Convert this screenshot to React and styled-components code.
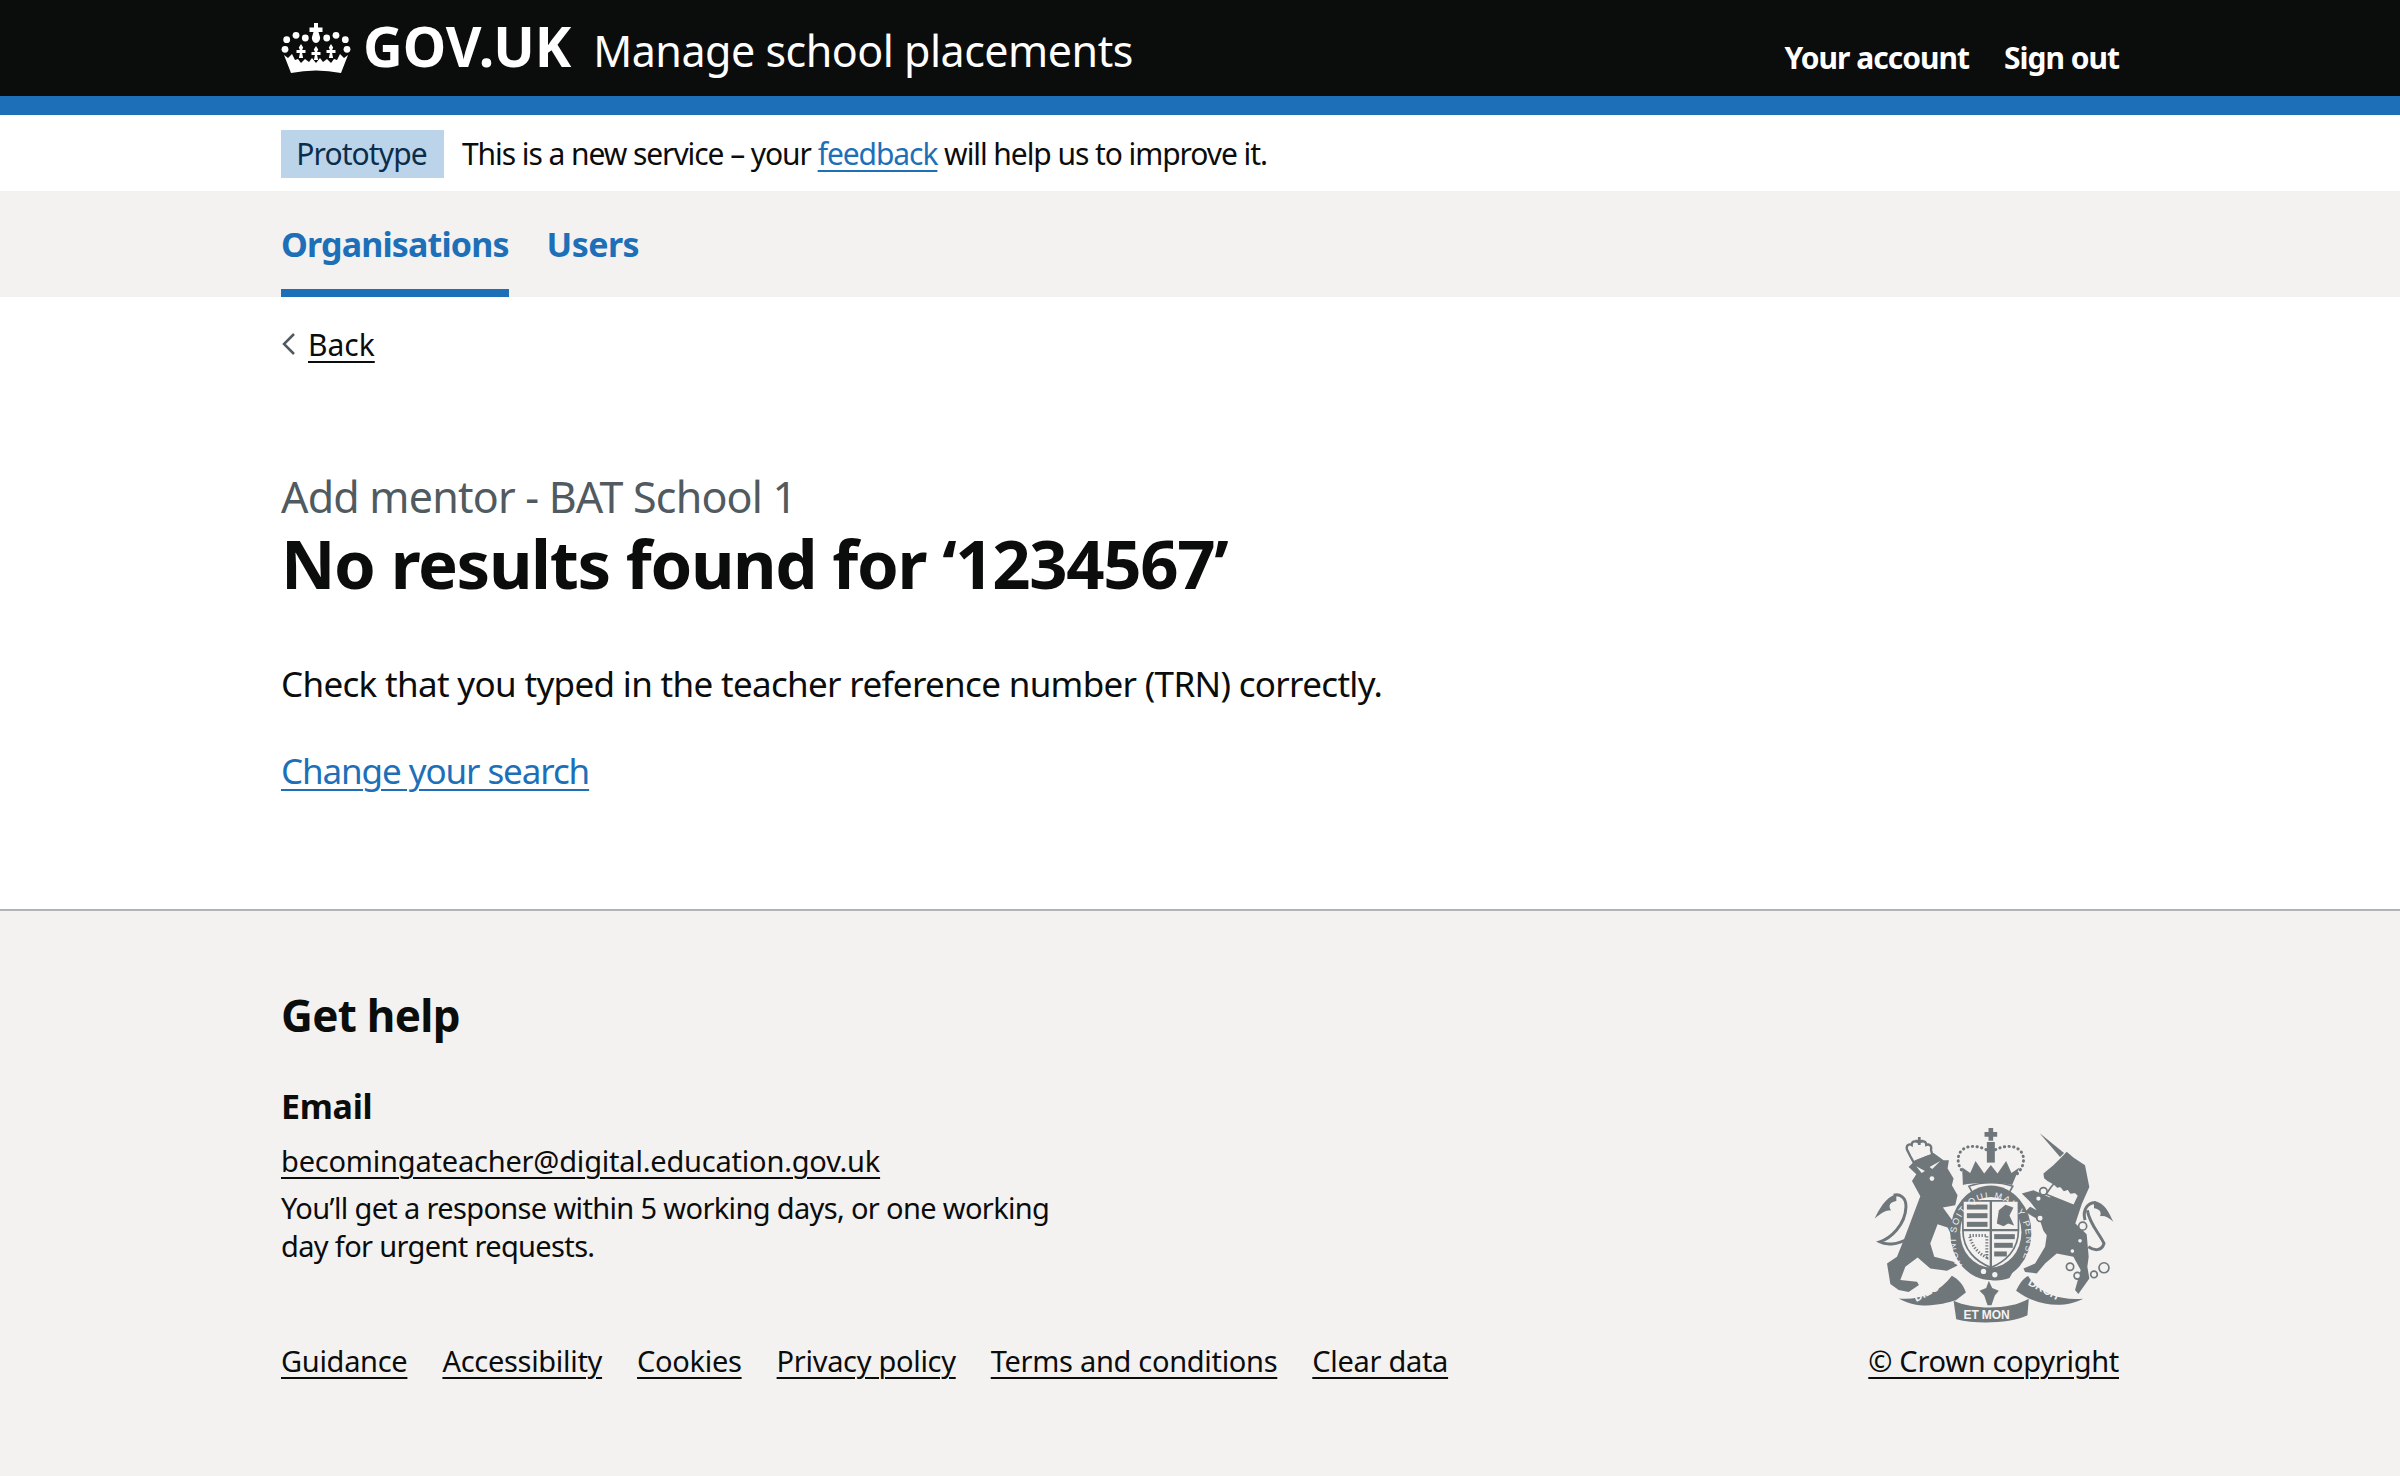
import React from 'react'
import styled, { createGlobalStyle } from 'styled-components'

const GlobalStyle = createGlobalStyle`
    body {
        margin: 0;
        background: #fff;
        color: #0b0c0c;
        font-family: "Noto Sans", "Liberation Sans", sans-serif;
    }
`;

const Page = styled.div`
    min-height: 1476px;
    display: flex;
    flex-direction: column;
`;

const Container = styled.div`
    width: 1838px;
    margin: 0 auto;
`;

const HeaderWrap = styled.header`
    height: 96px;
    background: #0b0c0c;
    border-bottom: 19px solid #1d70b8;
    color: #fff;
`;

const HeaderInner = styled(Container)`
    height: 96px;
    display: flex;
    align-items: center;
    justify-content: space-between;
`;

const Brand = styled.div`
    display: flex;
    align-items: center;
`;

const LogoText = styled.span`
    font-size: 55px;
    font-weight: 700;
    margin-left: 12px;
    margin-bottom: 6px;
    line-height: 1;
`;

const ServiceName = styled.span`
    font-size: 43px;
    margin-left: 22px;
    letter-spacing: -0.5px;
    margin-top: 4px;
`;

const HeaderLinks = styled.nav`
    display: flex;
    gap: 35px;
    margin-top: 18px;
`;

const HeaderLink = styled.a`
    color: #fff;
    font-size: 30px;
    font-weight: 700;
    letter-spacing: -1px;
`;

const PhaseBanner = styled(Container)`
    height: 76px;
    display: flex;
    align-items: center;
`;

const Tag = styled.strong`
    background: #bbd4ea;
    color: #0c2d4a;
    font-weight: 400;
    font-size: 30px;
    letter-spacing: -0.9px;
    height: 48px;
    width: 163px;
    box-sizing: border-box;
    padding: 0 2px 2px 0;
    margin-top: 2px;
    display: flex;
    align-items: center;
    justify-content: center;
    margin-right: 18px;
`;

const PhaseText = styled.span`
    font-size: 30px;
    letter-spacing: -1.07px;
`;

const Link = styled.a`
    color: ${props => props.$dark ? '#0b0c0c' : '#1d70b8'};
    text-decoration: underline;
    text-decoration-thickness: 2px;
    text-underline-offset: 5px;
`;

const NavBar = styled.nav`
    height: 106px;
    background: #f3f2f1;
`;

const NavInner = styled(Container)`
    height: 106px;
    display: flex;
    gap: 38px;
`;

const NavItem = styled.a`
    color: #1d70b8;
    font-size: 34px;
    font-weight: 700;
    letter-spacing: -0.6px;
    padding-top: 30px;
    box-sizing: border-box;
    height: 106px;
    border-bottom: 8px solid ${props => props.$active ? '#1d70b8' : 'transparent'};
    ${props => props.$active && 'letter-spacing: -0.85px;'}
`;

const Main = styled(Container)`
    height: 612px;
    box-sizing: border-box;
    padding-top: 27px;
`;

const BackLink = styled.div`
    display: flex;
    align-items: center;
    gap: 12px;
    font-size: 30px;
    height: 40px;
`;

const Caption = styled.div`
    margin-top: 103px;
    font-size: 43px;
    line-height: 60px;
    letter-spacing: -0.8px;
    color: #505a5f;
`;

const Heading = styled.h1`
    margin: -2px 0 0;
    font-size: 67px;
    line-height: 76px;
    letter-spacing: -1.35px;
    font-weight: 700;
`;

const Body = styled.p`
    margin: 58px 0 0;
    font-size: 35px;
    line-height: 50px;
    letter-spacing: -0.67px;
`;

const LinkPara = styled(Body)`
    margin-top: 37px;
    letter-spacing: -1.1px;
`;

const Footer = styled.footer`
    flex: 1;
    background: #f3f2f1;
    border-top: 2px solid #b1b4b6;
`;

const FooterInner = styled(Container)`
    padding-top: 74px;
    display: flex;
    justify-content: space-between;
    align-items: flex-end;
    font-size: 29px;
    line-height: 38px;
    letter-spacing: -0.3px;
`;

const FooterTitle = styled.h2`
    margin: 0;
    font-size: 44px;
    line-height: 60px;
    letter-spacing: -0.7px;
    font-weight: 700;
`;

const FooterEmail = styled.h3`
    margin: 36px 0 0;
    font-size: 34px;
    line-height: 50px;
    letter-spacing: -0.3px;
    font-weight: 700;
`;

const FooterHelp = styled.div`
    width: 800px;
    letter-spacing: -0.65px;
`;

const EmailLine = styled.div`
    margin-top: 11px;
    margin-bottom: 9px;
    letter-spacing: -0.2px;
`;

const FooterLinks = styled.div`
    display: flex;
    gap: 35px;
    margin-top: 76px;
    line-height: 40px;
    white-space: nowrap;
`;

const Copyright = styled.div`
    display: flex;
    flex-direction: column;
    align-items: center;
    line-height: 40px;
`;

const Arms = styled.svg`
    width: 243px;
    height: 197px;
    margin-bottom: 17px;
    display: block;
`;

const Fleur = ({ x, y }) => (
    <path d={`M${x} ${y}l2.200 3.500-1.100 2.500h3.400v3h-3.400l1 5h-4.200l1-5h-3.400v-3h3.400l-1.100-2.500z`} />
);

const Crown = () => (
    <svg width="70" height="52" viewBox="0 0 70 52" fill="#fff">
        <path d="M33 1h4v4.500h4.500v4.500H37.500l1.500 5c.6 2.500-1.400 6-4 6s-4.600-3.500-4-6l1.500-5H28.500V5.500H33z" />
        <circle cx="5.700" cy="17.700" r="3.400" />
        <circle cx="15" cy="13.300" r="3.400" />
        <circle cx="24.300" cy="16" r="3.400" />
        <circle cx="45.700" cy="16" r="3.400" />
        <circle cx="55" cy="13.300" r="3.400" />
        <circle cx="64.300" cy="17.700" r="3.400" />
        <circle cx="4" cy="27.300" r="3.400" />
        <circle cx="66" cy="27.300" r="3.400" />
        <Fleur x={20} y={22} />
        <Fleur x={35} y={24} />
        <Fleur x={50} y={22} />
        <path d="M3 33L7 36L11 32L14 38L17 37L20 41L24 37L28 40L31 36L35 41L39 36L42 40L46 37L50 41L53 37L56 38L59 32L63 36L67 33L60 51Q35 46 10 51Z" />
    </svg>
);

const armsColor = '#6f777b';
const armsBg = '#f3f2f1';

const lionPath = 'M205 170L225 150L280 128L310 150L326 150L322 175L340 205L335 225L352 255L345 285L308 292L350 350L362 396L340 388L322 352L292 342L270 400L282 440L340 455L352 466L320 482L270 475L232 442L195 470L180 510L230 515L236 525L205 546L175 540L150 522L140 460L170 440L190 390L240 258L215 212L228 192Z';
const unicornPath = 'M610 190L640 165L665 140L680 124L700 142L735 165L748 230L725 282L706 340L740 372L746 440L742 470L748 505L715 552L705 540L722 480L700 440L650 430L615 460L590 490L555 486L550 475L585 460L615 410L620 375L610 362L600 332L555 305L570 290L590 300L570 275L545 250L580 240L630 262L645 225L622 212L612 204Z';

const CoatOfArms = () => (
    <Arms viewBox="95 50 730 592">
        <g fill={armsColor}>
            {/* lion and its crown */}
            <path d="M200 118c-4-14 8-18 14-14 0-12 14-14 22-6 8-8 22-6 22 6 8-4 18 2 14 14l4 16-56 22-10-18z" fill={armsBg} stroke={armsColor} strokeWidth="7" />
            <path d="M233 80h8v8h8v8h-8v8h-8v-8h-8v-8h8z" />
            <path d={lionPath} />
            <path d="M205 385C170 405 135 405 118 395C150 385 195 345 197 290C198 262 178 250 160 255" fill="none" stroke={armsColor} strokeWidth="9" />
            <path d="M168 252C135 260 115 300 103 325C120 310 135 300 152 300C142 285 150 275 168 272Z" />
            <path d="M228 168l26 14-10 6zM300 152l-32 18 8 6z" fill={armsBg} />
            <circle cx="275" cy="205" r="7" fill={armsBg} />
            {/* unicorn */}
            <path d="M598 68L672 128L660 140Z" />
            <path d={unicornPath} />
            <path d="M735 330C726 296 746 275 768 278" fill="none" stroke={armsColor} strokeWidth="9" />
            <path d="M762 272C795 276 808 310 820 335C806 322 795 316 780 318C786 305 778 296 762 294Z" />
            <path d="M742 300C748 340 778 370 792 400C785 424 762 422 745 410" fill="none" stroke={armsColor} strokeWidth="9" />
            <path d="M632 232l10-12 10 10 10-2 10 12 12-4 8 12 14-2 10 10-14 30-84-34z" fill={armsBg} stroke={armsColor} strokeWidth="5" />
            <g fill={armsBg} stroke={armsColor} strokeWidth="5">
                <circle cx="610" cy="243" r="11" />
                <circle cx="595" cy="265" r="9" />
                <circle cx="600" cy="324" r="10" />
                <circle cx="728" cy="348" r="12" />
                <circle cx="720" cy="392" r="8" />
                <circle cx="697" cy="423" r="8" />
                <circle cx="690" cy="470" r="11" />
                <circle cx="712" cy="497" r="10" />
                <circle cx="762" cy="493" r="10" />
                <circle cx="792" cy="473" r="15" />
            </g>
            {/* royal crown */}
            <path d="M445 53h14v12h12v14h-12v12h-14v-12h-12v-14h12z" />
            <rect x="440" y="95" width="24" height="62" />
            <g fill="none" stroke={armsColor} strokeWidth="9" strokeDasharray="1 13" strokeLinecap="round">
                <path d="M438 118c-40-20-88-10-84 36 2 18 14 32 24 42" />
                <path d="M466 118c40-20 88-10 84 36-2 18-14 32-24 42" />
            </g>
            <path d="M366 172l24 16 16-36 26 38 20-26 20 26 26-38 16 36 24-16-22 52c-30-8-118-8-148 0z" />
            <path d="M386 228c40-14 92-14 132 0l-10 18c-34-10-78-10-112 0z" fill={armsBg} stroke={armsColor} strokeWidth="5" />
            {/* garter and shield */}
            <ellipse cx="452" cy="368" rx="122" ry="142" />
            <ellipse cx="452" cy="366" rx="92" ry="106" fill={armsBg} />
            <path d="M368 272H535V360C535 420 495 455 452 472C408 455 368 420 368 360Z" fill={armsBg} stroke={armsColor} strokeWidth="5" />
            <path d="M452 272V472M368 360H535" stroke={armsColor} strokeWidth="7" />
            <g>
                <rect x="380" y="283" width="62" height="15" />
                <rect x="380" y="309" width="62" height="15" />
                <rect x="380" y="335" width="62" height="15" />
                <rect x="462" y="372" width="62" height="15" />
                <rect x="462" y="398" width="56" height="15" />
                <rect x="462" y="424" width="38" height="15" />
                <path d="M470 340l6-40 20-16 24 8-12 24 14 30-18-6-14 8z" />
                <path d="M388 376h52v66c-26-12-44-32-52-66z" fill="none" stroke={armsColor} strokeWidth="9" strokeDasharray="4 5" />
            </g>
            <path id="garter-arc" d="M370 470A106 126 0 1 1 534 470" fill="none" />
            <text fontFamily="Liberation Sans, sans-serif" fontSize="27" fill={armsBg} letterSpacing="1">
                <textPath href="#garter-arc" textLength="500" startOffset="1%">HONI SOIT QUI MAL Y PENSE</textPath>
            </text>
            <path d="M388 462c36 34 90 40 132 20l-12 22c-36 14-80 8-112-20z" />
            <circle cx="430" cy="484" r="8" fill={armsBg} />
            <circle cx="464" cy="494" r="8" fill={armsBg} />
            {/* motto */}
            <path d="M175 565c60 6 120-14 160-68 20 10 36 30 42 50l-30 24c-40 12-110 30-172-6z" />
            <path d="M340 572c60 28 170 28 226-6l-4 50c-50 24-150 28-214 12z" />
            <path d="M528 542c10-20 20-36 36-44 30 50 90 74 166 68-50 26-130 30-202-24z" />
            <path d="M446 512l10 22 20 8-12 14-10 30h-12l-10-30-14-14 20-8z" />
            <g fontFamily="Liberation Sans, sans-serif" fontWeight="700" fill={armsBg}>
                <text x="228" y="576" fontSize="34" transform="rotate(-28 228 576)">DIEU</text>
                <text x="370" y="626" fontSize="36">ET MON</text>
                <text x="562" y="524" fontSize="34" transform="rotate(28 562 524)">DROIT</text>
            </g>
        </g>
    </Arms>
);

const BackArrow = () => (
    <svg width="15" height="24" viewBox="0 0 15 24" fill="none" stroke="#505a5f" strokeWidth="2.500">
        <path d="M13 2L3 12l10 10" />
    </svg>
);

export default function App() {
    return (
        <Page>
            <GlobalStyle />
            <HeaderWrap>
                <HeaderInner>
                    <Brand>
                        <Crown />
                        <LogoText>GOV.UK</LogoText>
                        <ServiceName>Manage school placements</ServiceName>
                    </Brand>
                    <HeaderLinks>
                        <HeaderLink>Your account</HeaderLink>
                        <HeaderLink>Sign out</HeaderLink>
                    </HeaderLinks>
                </HeaderInner>
            </HeaderWrap>
            <PhaseBanner>
                <Tag>Prototype</Tag>
                <PhaseText>This is a new service – your <Link>feedback</Link> will help us to improve it.</PhaseText>
            </PhaseBanner>
            <NavBar>
                <NavInner>
                    <NavItem $active>Organisations</NavItem>
                    <NavItem>Users</NavItem>
                </NavInner>
            </NavBar>
            <Main>
                <BackLink><BackArrow /><Link $dark>Back</Link></BackLink>
                <Caption>Add mentor - BAT School 1</Caption>
                <Heading>No results found for ‘1234567’</Heading>
                <Body>Check that you typed in the teacher reference number (TRN) correctly.</Body>
                <LinkPara><Link>Change your search</Link></LinkPara>
            </Main>
            <Footer>
                <FooterInner>
                    <div>
                        <FooterTitle>Get help</FooterTitle>
                        <FooterEmail>Email</FooterEmail>
                        <FooterHelp>
                            <EmailLine><Link $dark>becomingateacher@digital.education.gov.uk</Link></EmailLine>
                            You’ll get a response within 5 working days, or one working day for urgent requests.
                        </FooterHelp>
                        <FooterLinks>
                            <Link $dark>Guidance</Link>
                            <Link $dark>Accessibility</Link>
                            <Link $dark>Cookies</Link>
                            <Link $dark>Privacy policy</Link>
                            <Link $dark>Terms and conditions</Link>
                            <Link $dark>Clear data</Link>
                        </FooterLinks>
                    </div>
                    <Copyright>
                        <CoatOfArms />
                        <Link $dark>© Crown copyright</Link>
                    </Copyright>
                </FooterInner>
            </Footer>
        </Page>
    )
}
